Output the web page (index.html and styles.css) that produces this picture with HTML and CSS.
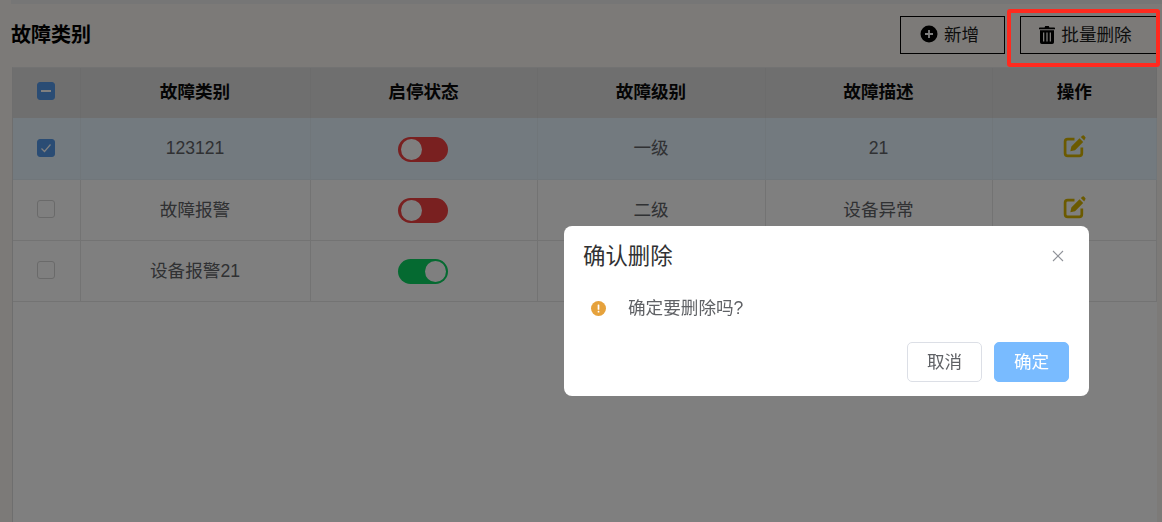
FILE: index.html
```html
<!DOCTYPE html>
<html lang="zh-CN">
<head>
<meta charset="utf-8">
<title>故障类别</title>
<link rel="stylesheet" href="styles.css">
</head>
<body>
<div class="page">
  <div class="strip"></div>
  <header class="bar">
    <h1 class="title">故障类别</h1>
    <div class="actions">
      <button class="btn btn-add">
        <svg class="ic" width="18" height="18" viewBox="0 0 18 18"><circle cx="9" cy="9" r="8.5" fill="#000"/><path d="M9 5v8M5 9h8" stroke="#fff" stroke-width="1.8"/></svg>
        <span>新增</span>
      </button>
      <button class="btn btn-del">
        <svg class="ic" width="16" height="19" viewBox="0 0 16 19"><path d="M5.6 2.4 6.2 1h3.6l.6 1.4H15.2a.8.8 0 0 1 .8.8v1H0v-1a.8.8 0 0 1 .8-.8z" fill="#000"/><path fill="#000" fill-rule="evenodd" d="M1 5.2h14v12a1.8 1.8 0 0 1-1.8 1.8H2.800A1.800 1.800 0 0 1 1 17.200zM4 7.500v9h1.300v-9zM7.350 7.500v9h1.300v-9zM10.700 7.500v9H12v-9z"/></svg>
        <span>批量删除</span>
      </button>
    </div>
  </header>
  <main class="panel">
    <table class="grid">
      <colgroup>
        <col class="c0"><col class="c1"><col class="c2"><col class="c3"><col class="c4"><col class="c5">
      </colgroup>
      <thead>
        <tr>
          <th><span class="check on"><i class="dash"></i></span></th>
          <th>故障类别</th><th>启停状态</th><th>故障级别</th><th>故障描述</th><th>操作</th>
        </tr>
      </thead>
      <tbody>
        <tr class="sel">
          <td><span class="check on"><svg width="12" height="10" viewBox="0 0 12 10"><path d="M1.500 5.500 4.500 8.500 10.500 1.500" fill="none" stroke="#fff" stroke-width="1.200"/></svg></span></td>
          <td>123121</td>
          <td class="sw-cell"><span class="sw off"><i class="knob"></i></span></td>
          <td>一级</td><td>21</td>
          <td><svg class="edit" width="23" height="23" viewBox="0 0 22 22"><path d="M11 4H4.500A2.500 2.500 0 0 0 2 6.500v11A2.500 2.500 0 0 0 4.500 20h11a2.500 2.500 0 0 0 2.500-2.500V12" fill="none" stroke="#d6b400" stroke-width="2.600"/><path d="M7 15.500 8 11 15.800 3.200 19.300 6.700 11.500 14.500zM17 2 18.200 1a1.500 1.500 0 0 1 2.300 0L21 1.600a1.500 1.500 0 0 1 0 2.200L20.300 5.200z" fill="#d6b400"/></svg></td>
        </tr>
        <tr>
          <td><span class="check"></span></td>
          <td>故障报警</td>
          <td class="sw-cell"><span class="sw off"><i class="knob"></i></span></td>
          <td>二级</td><td>设备异常</td>
          <td><svg class="edit" width="23" height="23" viewBox="0 0 22 22"><path d="M11 4H4.500A2.500 2.500 0 0 0 2 6.500v11A2.500 2.500 0 0 0 4.500 20h11a2.500 2.500 0 0 0 2.500-2.500V12" fill="none" stroke="#d6b400" stroke-width="2.600"/><path d="M7 15.500 8 11 15.800 3.200 19.300 6.700 11.500 14.500zM17 2 18.200 1a1.500 1.500 0 0 1 2.300 0L21 1.600a1.500 1.500 0 0 1 0 2.200L20.300 5.200z" fill="#d6b400"/></svg></td>
        </tr>
        <tr>
          <td><span class="check"></span></td>
          <td>设备报警21</td>
          <td class="sw-cell"><span class="sw on"><i class="knob"></i></span></td>
          <td></td><td></td><td></td>
        </tr>
      </tbody>
    </table>
  </main>
</div>
<div class="overlay"></div>
<div class="mark"></div>
<section class="modal">
  <div class="m-head">
    <span class="m-title">确认删除</span>
    <svg class="m-close" width="12" height="12" viewBox="0 0 12 12"><path d="M1 1 11 11M11 1 1 11" stroke="#909399" stroke-width="1.100"/></svg>
  </div>
  <div class="m-body">
    <svg class="m-warn" width="15" height="15" viewBox="0 0 16 16"><circle cx="8" cy="8" r="8" fill="#e6a23c"/><rect x="7.100" y="3.600" width="1.800" height="5.800" rx=".6" fill="#fff"/><rect x="7.100" y="10.500" width="1.800" height="1.800" rx=".6" fill="#fff"/></svg>
    <span class="m-text">确定要删除吗?</span>
  </div>
  <div class="m-foot">
    <button class="m-btn cancel">取消</button>
    <button class="m-btn ok">确定</button>
  </div>
</section>
</body>
</html>
```

FILE: styles.css
```css
* { box-sizing: border-box; }
html, body { margin: 0; height: 100%; overflow: hidden; }
body {
  background: #f8f5f1;
  font-family: "Liberation Sans", "Noto Sans CJK SC", sans-serif;
  color: #606266;
}
.page { height: 522px; display: flex; flex-direction: column; padding-right: 5px; }
.strip { height: 4px; margin-left: 11px; margin-right: -5px; background: #ececec; flex: none; }
.bar {
  height: 63px;
  flex: none;
  display: flex;
  align-items: flex-start;
  justify-content: space-between;
  padding-left: 11px;
}
.title { margin: 16px 0 0; font-size: 20px; line-height: 30px; font-weight: 700; color: #000; }
.actions { display: flex; gap: 15px; margin-top: 12px; }
.btn {
  height: 38px;
  display: flex;
  align-items: center;
  justify-content: center;
  border: 1px solid #000;
  background: transparent;
  font: inherit;
  font-size: 17.6px;
  line-height: 24px;
  color: #1c1c1c;
  padding: 0 6px 0 0;
}
.btn-add { width: 105px; gap: 6px; }
.btn-del { width: 137px; gap: 6px; }
.ic { flex: none; margin-bottom: 2px; }
.panel {
  flex: 1;
  margin-left: 12px;
  background: #fff;
  border-left: 1px solid #dcdcdc;
  border-top: 1px solid #e4e4e4;
}
.grid { width: 100%; border-collapse: collapse; table-layout: fixed; font-size: 17.6px; line-height: 24px; }
.c0 { width: 67px; }
.c1 { width: 230px; }
.c2 { width: 227px; }
.c3 { width: 228px; }
.c4 { width: 227px; }
th, td { text-align: center; padding: 0; border-right: 1px solid #e6e6e6; border-bottom: 1px solid #e6e6e6; }
th {
  height: 50px;
  padding-bottom: 3px;
  background: #dfdfdf;
  color: #0a0a0a;
  font-weight: 700;
  border-color: #d9d9d9;
  border-bottom: 0;
}
td { height: 61px; }
td.sw-cell { padding: 2px 2px 0 0; }
.sel td { background: #e6f4ff; border-color: #e0ecf5; }
.check {
  display: inline-flex;
  align-items: center;
  justify-content: center;
  width: 18px;
  height: 18px;
  margin-bottom: 3px;
  border: 1px solid #d4d4d4;
  border-radius: 3px;
  background: #fff;
  vertical-align: middle;
}
.check.on { background: #5599e8; border-color: #5599e8; }
.dash { width: 10px; height: 2px; background: #fff; }
.sw {
  display: inline-block;
  position: relative;
  width: 50px;
  height: 25px;
  border-radius: 13px;
  vertical-align: middle;
}
.sw.off { background: #f24040; }
.sw.on { background: #0bd462; }
.knob {
  position: absolute;
  top: 2px;
  width: 21px;
  height: 21px;
  border-radius: 50%;
  background: #fff;
}
.sw.off .knob { left: 3px; }
.sw.on .knob { right: 2px; }
.edit { vertical-align: middle; margin-bottom: 4px; }
.overlay { position: fixed; inset: 0; background: rgba(0, 0, 0, .5); }
.mark {
  position: fixed;
  left: 1007px;
  top: 9px;
  width: 153px;
  height: 58px;
  border: 4px solid #ff2a1f;
  border-radius: 3px;
}
.modal {
  position: fixed;
  left: 564px;
  top: 226px;
  width: 525px;
  height: 170px;
  background: #fff;
  border-radius: 8px;
  display: flex;
  flex-direction: column;
}
.m-head {
  display: flex;
  align-items: center;
  justify-content: space-between;
  padding: 16px 20px 0 19px;
  height: 46px;
}
.m-title { font-size: 22.4px; line-height: 32px; color: #303133; }
.m-close { display: block; margin-right: 5px; margin-bottom: 2px; }
.m-body {
  display: flex;
  align-items: center;
  padding: 24px 0 0 27px;
  font-size: 17.6px;
  line-height: 24px;
  color: #606266;
}
.m-warn { flex: none; margin-right: 22px; }
.m-foot {
  margin-top: auto;
  display: flex;
  justify-content: flex-end;
  gap: 12px;
  padding: 0 20px 14px;
}
.m-btn {
  width: 75px;
  height: 40px;
  border-radius: 5px;
  font: inherit;
  font-size: 17.6px;
  line-height: 24px;
  padding: 0;
}
.cancel { background: #fff; border: 1px solid #dcdfe6; color: #606266; }
.ok { background: #79bbff; border: 1px solid #79bbff; color: #fff; }
```
